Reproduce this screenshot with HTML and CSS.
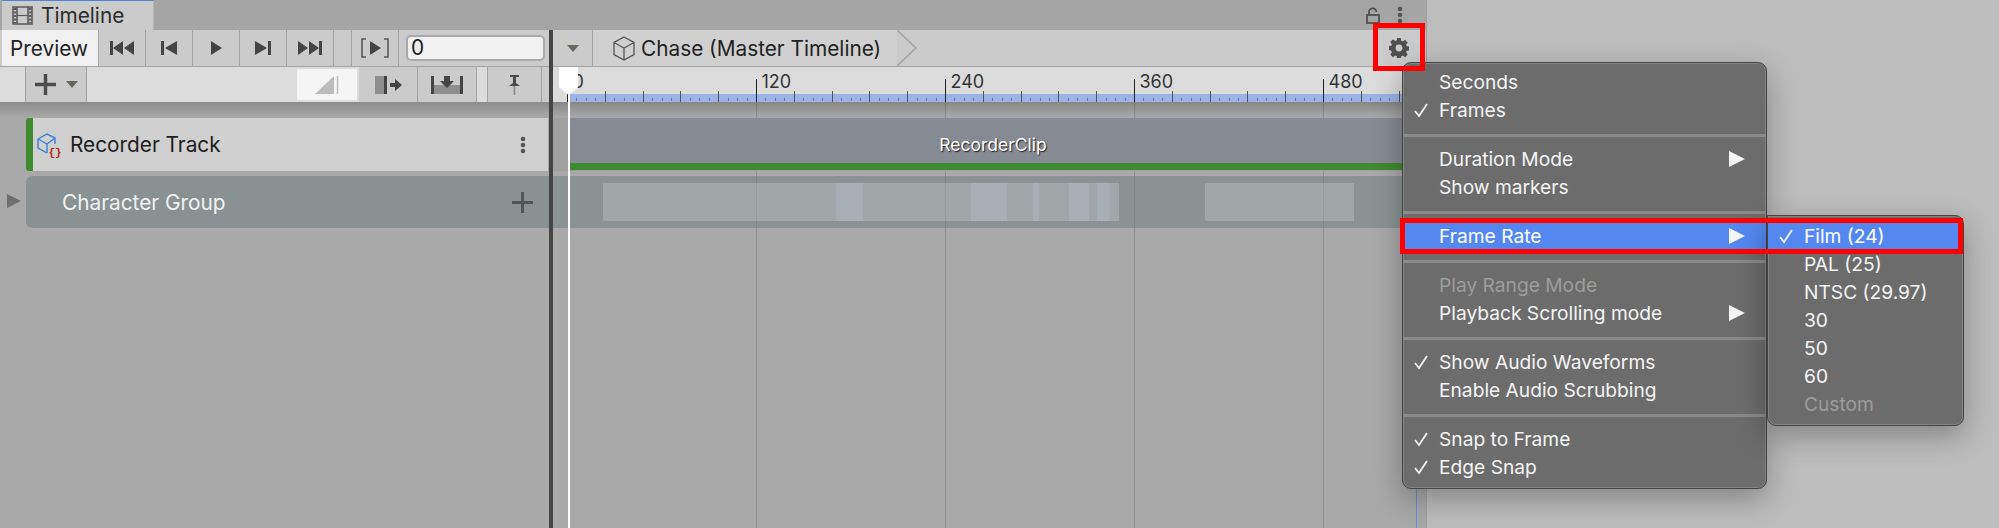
FILE: index.html
```html
<!DOCTYPE html>
<html lang="en">
<head>
<meta charset="utf-8">
<title>Timeline</title>
<link rel="stylesheet" href="styles.css">
</head>
<body>
<div class="page">
  <div class="window">
    <div class="tabbar">
      <div class="tab">
        <svg class="film" viewBox="0 0 21 19"><path d="M1 1h19v17H1z" fill="none" stroke="#5a5a5a" stroke-width="1.6"/><path d="M5 1v17M16 1v17" stroke="#5a5a5a" stroke-width="1.6" fill="none"/><path d="M5 9.500h11" stroke="#5a5a5a" stroke-width="1.2"/><path d="M3 2v15M18 2v15" stroke="#5a5a5a" stroke-width="2.600" stroke-dasharray="2 1.500"/></svg>
        <span>Timeline</span>
      </div>
      <div class="tabtools">
        <svg class="lock" viewBox="0 0 14 17"><path d="M3 8V5a3.700 3.700 0 0 1 7.400 0" fill="none" stroke="#4c4c4c" stroke-width="1.700"/><rect x="1" y="8" width="12" height="8" fill="none" stroke="#4c4c4c" stroke-width="1.700"/></svg>
        <svg class="kebab" viewBox="0 0 6 18"><circle cx="3" cy="3" r="2.300"/><circle cx="3" cy="9" r="2.300"/><circle cx="3" cy="15" r="2.300"/></svg>
      </div>
    </div>
    <div class="panes">
      <div class="left">
        <div class="bar1">
          <div class="preview">Preview</div>
          <div class="btn"><svg class="i24" viewBox="0 0 24 14"><path d="M0 0h3v14H0zM3 7l10-7v14zM14 7L24 0v14z"/></svg></div>
          <div class="btn"><svg class="i16" viewBox="0 0 16 14"><path d="M0 0h3v14H0zM4 7l12-7v14z"/></svg></div>
          <div class="btn"><svg class="i11" viewBox="0 0 11 14"><path d="M0 0l11 7-11 7z"/></svg></div>
          <div class="btn"><svg class="i16" viewBox="0 0 16 14"><path d="M16 0h-3v14h3zM12 7L0 0v14z"/></svg></div>
          <div class="btn"><svg class="i24" viewBox="0 0 24 14"><path d="M24 0h-3v14h3zM21 7L11 0v14zM10 7L0 0v14z"/></svg></div>
          <div class="btn gap"></div>
          <div class="btn"><svg class="i28" viewBox="0 0 28 20"><path d="M5 1H1v18h4M23 1h4v18h-4" fill="none" stroke="#555" stroke-width="1.500"/><path d="M9 3l11 7-11 7z"/></svg></div>
          <div class="framecell"><div class="frameinput">0</div></div>
        </div>
        <div class="bar2">
          <div class="cell c-start"></div>
          <div class="btn2 addbtn">
            <svg class="plus" viewBox="0 0 21 21"><path d="M8.750 0h3.500v8.750h8.750v3.500h-8.750v8.750h-3.500v-8.750H0v-3.500h8.750z"/></svg>
            <svg class="caret" viewBox="0 0 12 7"><path d="M0 0h12L6 7z"/></svg>
          </div>
          <div class="spacer"></div>
          <div class="whitebtn"><svg class="i24-18" viewBox="0 0 24 18"><path d="M0 18L19 0v18z" fill="#bdbdbd"/><path d="M22.500 0v18" stroke="#bdbdbd" stroke-width="1.500"/></svg></div>
          <div class="btn2"><svg class="i27-18" viewBox="0 0 27 18"><rect x="0" y="0" width="9" height="18" fill="#8e8e8e"/><rect x="9" y="0" width="3" height="18" fill="#444"/><path d="M15 7h5V3l7 6-7 6v-4h-5z" fill="#444"/></svg></div>
          <div class="btn2"><svg class="i32-18" viewBox="0 0 32 18"><path d="M0 0h3v18H0zM29 0h3v18h-3z" fill="#444"/><rect x="3" y="9" width="26" height="9" fill="#8e8e8e"/><path d="M13 0h6v5h4l-7 7-7-7h4z" fill="#444"/></svg></div>
          <div class="cell c-mini"></div>
          <div class="btn2 pinbtn"><svg class="i13-20" viewBox="0 0 13 20"><path d="M2 0h9v2H8v6l4 3H1l4-3V2H2z" fill="#4c4c4c"/><rect x="5.700" y="11" width="1.600" height="9" fill="#8a8a8a"/></svg></div>
          <div class="cell c-end"></div>
        </div>
        <div class="shade"></div>
        <div class="track-head">
          <svg class="rec" viewBox="0 0 25 25"><path d="M1 6l9-5 8 4v6M1 6v9l9 5M1 6l9 5 8-6M10 11v9" fill="none" stroke="#3d7fd9" stroke-width="1.400"/><text x="11.500" y="23" class="rectext">{}</text></svg>
          <span class="track-name">Recorder Track</span>
          <svg class="kebab" viewBox="0 0 6 18"><circle cx="3" cy="3" r="2.300"/><circle cx="3" cy="9" r="2.300"/><circle cx="3" cy="15" r="2.300"/></svg>
        </div>
        <div class="group-row">
          <svg class="expander" viewBox="0 0 14 14"><path d="M0 0l14 7-14 7z"/></svg>
          <div class="group-head">
            <span class="group-name">Character Group</span>
            <svg class="plus2" viewBox="0 0 21 21"><path d="M9 0h3v9h9v3h-9v9H9v-9H0V9h9z"/></svg>
          </div>
        </div>
      </div>
      <div class="splitter"></div>
      <div class="right">
        <div class="crumbbar">
          <div class="crumbdrop"><svg class="caret" viewBox="0 0 12 7"><path d="M0 0h12L6 7z"/></svg></div>
          <div class="crumb">
            <svg class="cube" viewBox="0 0 24 25"><path d="M12 1l10 5.500v12L12 24 2 18.500v-12zM2 6.500l10 5.500 10-5.500M12 12v12" fill="none" stroke="#555" stroke-width="1.300"/></svg>
            <span>Chase (Master Timeline)</span>
            <svg class="chev" viewBox="0 0 20 36"><path d="M0 0l19 18L0 36" fill="none" stroke="#a3a3a3" stroke-width="1.300"/></svg>
          </div>
          <div class="crumbfill"></div>
          <svg class="gear" viewBox="0 0 20 20"><path d="M8.200 0h3.600l.5 2.800 1.500.6 2.300-1.600 2.600 2.600-1.600 2.300.6 1.500 2.800.5v3.600l-2.800.5-.6 1.500 1.600 2.300-2.600 2.600-2.300-1.600-1.500.6-.5 2.800H8.200l-.5-2.800-1.500-.6-2.300 1.600-2.600-2.600 1.600-2.300-.6-1.500L-.5 11.800V8.200l2.800-.5.6-1.500-1.600-2.300 2.600-2.600 2.300 1.600 1.500-.6z M10 6.600a3.400 3.400 0 1 0 0 6.800 3.400 3.400 0 0 0 0-6.800z" fill="#4f4f4f" fill-rule="evenodd"/></svg>
        </div>
        <div class="ruler">
          <div class="labels">
            <span class="lab">0</span><span class="lab">120</span><span class="lab">240</span><span class="lab">360</span><span class="lab">480</span>
          </div>
        </div>
        <div class="tracks">
          <div class="shade shade-r"></div>
          <div class="clip-row">
            <div class="clip"><span class="clip-name">RecorderClip</span></div>
          </div>
          <div class="group-lane">
            <div class="blocks">
              <div class="blk w233"></div><div class="blk hi w27"></div><div class="blk w108"></div><div class="blk hi w36"></div><div class="blk w26"></div><div class="blk hi w6"></div><div class="blk w30"></div><div class="blk hi w20"></div><div class="blk w8"></div><div class="blk hi w13"></div><div class="blk w9"></div><div class="space86"></div><div class="blk w149"></div>
            </div>
          </div>
        </div>
        <div class="playhead"></div>
        <div class="edge-line"></div>
      </div>
    </div>
  </div>
  <div class="outside"></div>

  <div class="menu main-menu">
    <div class="mi"><span class="t">Seconds</span></div>
    <div class="mi"><svg class="chk" viewBox="0 0 14 15"><path d="M1 8l4 5L13 1"/></svg><span class="t">Frames</span></div>
    <div class="sep"></div>
    <div class="mi"><span class="t">Duration Mode</span><svg class="arr" viewBox="0 0 16 16"><path d="M0 0l16 8-16 8z"/></svg></div>
    <div class="mi"><span class="t">Show markers</span></div>
    <div class="sep"></div>
    <div class="mi active"><span class="t">Frame Rate</span><svg class="arr" viewBox="0 0 16 16"><path d="M0 0l16 8-16 8z"/></svg></div>
    <div class="sep"></div>
    <div class="mi off"><span class="t">Play Range Mode</span></div>
    <div class="mi"><span class="t">Playback Scrolling mode</span><svg class="arr" viewBox="0 0 16 16"><path d="M0 0l16 8-16 8z"/></svg></div>
    <div class="sep"></div>
    <div class="mi"><svg class="chk" viewBox="0 0 14 15"><path d="M1 8l4 5L13 1"/></svg><span class="t">Show Audio Waveforms</span></div>
    <div class="mi"><span class="t">Enable Audio Scrubbing</span></div>
    <div class="sep"></div>
    <div class="mi"><svg class="chk" viewBox="0 0 14 15"><path d="M1 8l4 5L13 1"/></svg><span class="t">Snap to Frame</span></div>
    <div class="mi"><svg class="chk" viewBox="0 0 14 15"><path d="M1 8l4 5L13 1"/></svg><span class="t">Edge Snap</span></div>
  </div>
  <div class="menu sub-menu">
    <div class="mi active"><svg class="chk" viewBox="0 0 14 15"><path d="M1 8l4 5L13 1"/></svg><span class="t">Film (24)</span></div>
    <div class="mi"><span class="t">PAL (25)</span></div>
    <div class="mi"><span class="t">NTSC (29.97)</span></div>
    <div class="mi"><span class="t">30</span></div>
    <div class="mi"><span class="t">50</span></div>
    <div class="mi"><span class="t">60</span></div>
    <div class="mi off"><span class="t">Custom</span></div>
  </div>
  <div class="redbox red-gear"></div>
  <div class="redbox red-rate"></div>
</div>
</body>
</html>
```
FILE: styles.css
```css
* { box-sizing: border-box; }
html, body { margin: 0; padding: 0; }
body { font-family: Inter, "Liberation Sans", sans-serif; color: #222; }
.page { position: relative; display: flex; width: 1999px; height: 528px; overflow: hidden; background: #bdbdbd; }
.window { width: 1427px; height: 528px; display: flex; flex-direction: column; background: #a9a9a9; border-right: 1px solid #a0a0a0; }
.outside { flex: 1; background: #bdbdbd; }
svg { display: block; flex: none; }

.tabbar { height: 30px; display: flex; justify-content: space-between; background: #a5a5a5; padding-left: 2px; }
.tab { width: 152px; height: 30px; display: flex; align-items: center; gap: 8px; padding-left: 10px; background: #cbcbcb; border-top: 1px solid #4f83d8; border-right: 1px solid #b5b5b5; font-size: 20.800px; color: #2c2c2c; }
.film { width: 21px; height: 19px; }
.tabtools { display: flex; align-items: center; gap: 17px; padding-right: 23px; }
.lock { width: 14px; height: 17px; }
.kebab { width: 6px; height: 18px; fill: #555; }

.panes { flex: 1; display: flex; min-height: 0; }
.left { width: 549px; display: flex; flex-direction: column; }
.splitter { width: 4px; background: #454545; }
.right { position: relative; flex: 1; display: flex; flex-direction: column; min-width: 0; }

.bar1 { height: 37px; display: flex; background: #cbcbcb; border-bottom: 1px solid #a4a4a4; padding-left: 2px; }
.preview { width: 97px; background: #f0f0f0; border-right: 1px solid #a4a4a4; font-size: 20.800px; display: flex; align-items: center; padding-left: 8px; color: #222; }
.btn { width: 47px; display: flex; align-items: center; justify-content: center; border-right: 1px solid #a4a4a4; }
.btn svg { fill: #444; }
.btn.gap { width: 18px; }
.i24 { width: 24px; height: 14px; }
.i16 { width: 16px; height: 14px; }
.i11 { width: 11px; height: 14px; }
.i28 { width: 28px; height: 20px; }
.framecell { flex: 1; padding: 5px 4px 4px 7px; }
.frameinput { height: 26px; background: #f0f0f0; border: 2px solid #a9a9a9; border-radius: 5px; font-size: 20.800px; line-height: 22px; padding-left: 3px; color: #222; }

.bar2 { height: 35px; display: flex; background: #dcdcdc; }
.cell { background: #dcdcdc; border-right: 1px solid #a4a4a4; }
.c-start { width: 26px; }
.c-mini { width: 11px; }
.c-end { flex: 1; background: #cbcbcb; border-right: 0; }
.btn2 { width: 59px; display: flex; align-items: center; justify-content: center; background: #cbcbcb; border-right: 1px solid #a4a4a4; }
.addbtn { width: 61px; gap: 10px; }
.plus { width: 21px; height: 21px; fill: #4c4c4c; }
.caret { width: 12px; height: 7px; fill: #68685f; }
.spacer { width: 210px; }
.whitebtn { width: 60px; margin: 2px 2px 2px 0; background: #f5f5f5; display: flex; align-items: center; justify-content: center; }
.i24-18 { width: 24px; height: 18px; }
.i27-18 { width: 27px; height: 18px; }
.i32-18 { width: 32px; height: 18px; }
.i13-20 { width: 13px; height: 20px; }
.pinbtn { width: 54px; }

.shade { height: 16px; background: linear-gradient(#8c8c8c, #a9a9a9); flex: none; }

.track-head { margin-left: 26px; width: 522px; height: 53px; display: flex; align-items: center; background: #d0d0d0; border-left: 7px solid #3f8a2e; border-radius: 3px 0 0 3px; padding-left: 4px; }
.rec { width: 25px; height: 25px; margin-top: 2px; }
.rectext { font-family: "Liberation Mono", monospace; font-size: 11px; font-weight: 700; fill: #b3261e; }
.track-name { font-size: 20.800px; margin-left: 8px; flex: 1; color: #1d1d1d; }
.track-head .kebab { margin-right: 22px; }

.group-row { margin-top: 5px; height: 52px; display: flex; align-items: center; }
.expander { width: 14px; height: 14px; fill: #6f6f6f; margin-left: 7px; margin-right: 5px; margin-top: -2px; }
.group-head { flex: 1; height: 52px; display: flex; align-items: center; justify-content: space-between; background: #899193; border-radius: 6px 0 0 6px; padding: 0 16px 0 36px; }
.group-name { font-size: 20.800px; color: #f1f1f1; }
.plus2 { width: 21px; height: 21px; fill: #555; }

.crumbbar { height: 37px; display: flex; align-items: center; background: #cbcbcb; border-bottom: 1px solid #a4a4a4; padding-right: 17px; }
.crumbdrop { width: 40px; height: 36px; display: flex; align-items: center; justify-content: center; border-right: 1px solid #a4a4a4; }
.crumb { position: relative; height: 36px; width: 324px; display: flex; align-items: center; gap: 5px; padding-left: 19px; font-size: 20.800px; background: #d0d0d0; color: #222; }
.cube { width: 24px; height: 25px; }
.chev { position: absolute; right: 0; top: 0; width: 20px; height: 36px; background: #cbcbcb; }
.crumbfill { flex: 1; }
.gear { width: 20px; height: 20px; }

.ruler { height: 35px; flex: none; background-color: #dcdcdc;
  background-image:
    repeating-linear-gradient(90deg, #222 0 1px, transparent 1px 189px),
    repeating-linear-gradient(90deg, #555 0 1px, transparent 1px 37.8px),
    repeating-linear-gradient(90deg, #6f7b95 0 1px, transparent 1px 9.45px),
    linear-gradient(#9db3e6, #9db3e6);
  background-size: 100% 23px, 100% 11px, 100% 3px, 100% 8px;
  background-position: 14px 100%, 14px 100%, 14px 31px, 17px 100%;
  background-repeat: no-repeat; }
.labels { display: flex; padding-left: 14.500px; padding-top: 4px; }
.lab { width: 189px; padding-left: 5px; font-size: 18px; line-height: 22px; color: #333; flex: none; }

.tracks { flex: 1; min-height: 0; background-image: repeating-linear-gradient(90deg, rgba(0,0,0,.16) 0 1px, transparent 1px 189px); background-position: 203px 0; background-repeat: no-repeat; }
.shade-r { background: linear-gradient(rgba(0,0,0,.2), rgba(0,0,0,0)); }
.clip-row { height: 53px; background: #a0a0a0; padding-left: 17px; padding-bottom: 1px; }
.clip { height: 52px; background: #868a92; border-bottom: 7px solid #3f8a2e; display: flex; align-items: center; justify-content: center; padding: 7px 10px 0 0; }
.clip-name { font-size: 17.500px; color: #fff; text-shadow: 1px 1px 1px #222; }
.group-lane { margin-top: 5px; height: 52px; background: rgba(107,123,125,.5); padding: 7px 0 7px 50px; }
.blocks { display: flex; height: 38px; }
.blk { background: rgba(255,255,255,.2); flex: none; }
.blk.hi { background: rgba(225,235,255,.33); }
.w233 { width: 233px; } .w27 { width: 27px; } .w108 { width: 108px; } .w36 { width: 36px; }
.w26 { width: 26px; } .w6 { width: 6px; } .w30 { width: 30px; } .w20 { width: 20px; }
.w8 { width: 8px; } .w13 { width: 13px; } .w9 { width: 9px; } .w149 { width: 149px; }
.space86 { width: 86px; }

.playhead { position: absolute; left: 15px; top: 37px; bottom: 0; width: 2px; background: #fff; }
.playhead::before { content: ""; position: absolute; left: -9px; top: 0; width: 19px; height: 28px; background: #fff; clip-path: polygon(0 0, 100% 0, 100% 72%, 50% 100%, 0 72%); }
.edge-line { position: absolute; right: 9px; bottom: 0; height: 40px; width: 1px; background: #6b8fd6; }

.menu { position: absolute; background: #6c6c6c; border: 1px solid #454545; border-radius: 9px; box-shadow: 0 10px 30px rgba(0,0,0,.3), inset 0 0 0 1px #838383; font-size: 19.200px; color: #f4f4f4; }
.main-menu { left: 1402px; top: 62px; width: 365px; padding: 6px 0; }
.sub-menu { left: 1767px; top: 215px; width: 197px; padding: 7px 0 6px; border-radius: 0 9px 9px 9px; }
.mi { position: relative; height: 28px; display: flex; align-items: center; padding: 0 0 2px 36px; }
.mi.active { background: #5488f0; color: #fff; }
.mi.off { color: #9c9c9c; }
.t { flex: 1; white-space: nowrap; }
.chk { position: absolute; left: 11px; top: 6px; width: 14px; height: 15px; fill: none; stroke: #f4f4f4; stroke-width: 1.800; }
.arr { width: 16px; height: 16px; fill: #f4f4f4; margin-right: 21px; }
.sep { height: 21px; display: flex; align-items: center; }
.sep::before { content: ""; display: block; width: 100%; height: 3px; background: #8a8a8a; }

.redbox { position: absolute; border: 5px solid #f00; }
.red-gear { left: 1373px; top: 23px; width: 52px; height: 48px; }
.red-rate { left: 1400px; top: 218px; width: 563px; height: 36px; }
```
